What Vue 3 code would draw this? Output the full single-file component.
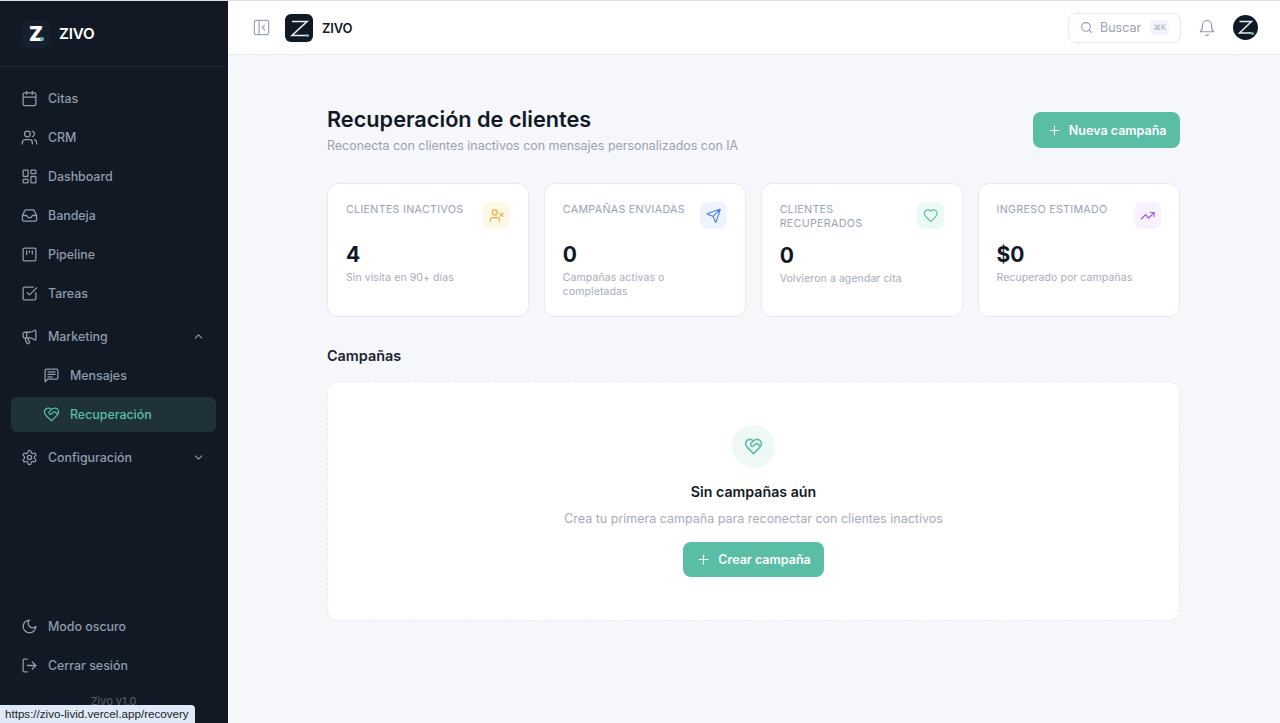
<script setup>
const c = (x, y, r) => `M${x - r} ${y}a${r} ${r} 0 1 0 ${2 * r} 0a${r} ${r} 0 1 0 ${-2 * r} 0z`
const sq = 'M5 3h14a2 2 0 0 1 2 2v14a2 2 0 0 1-2 2H5a2 2 0 0 1-2-2V5a2 2 0 0 1 2-2z'
const heart = 'M19 14c1.49-1.46 3-3.21 3-5.5A5.5 5.5 0 0 0 16.5 3c-1.76 0-3 .5-4.5 2-1.5-1.5-2.74-2-4.5-2A5.5 5.5 0 0 0 2 8.5c0 2.3 1.5 4.05 3 5.5l7 7Z'
const handshake = heart + 'M12 5 9.04 7.96a2.17 2.17 0 0 0 0 3.08c.82.82 2.13.85 3 .07l2.07-1.9a2.82 2.82 0 0 1 3.79 0l2.96 2.66'
const icons = {
  calendar: 'M5 4h14a2 2 0 0 1 2 2v14a2 2 0 0 1-2 2H5a2 2 0 0 1-2-2V6a2 2 0 0 1 2-2zM16 2v4M8 2v4M3 10h18',
  users: 'M16 21v-2a4 4 0 0 0-4-4H6a4 4 0 0 0-4 4v2' + c(9, 7, 4) + 'M22 21v-2a4 4 0 0 0-3-3.87M16 3.13a4 4 0 0 1 0 7.75',
  dash: 'M4 3h5a1 1 0 0 1 1 1v7a1 1 0 0 1-1 1H4a1 1 0 0 1-1-1V4a1 1 0 0 1 1-1zM15 3h5a1 1 0 0 1 1 1v3a1 1 0 0 1-1 1h-5a1 1 0 0 1-1-1V4a1 1 0 0 1 1-1zM15 12h5a1 1 0 0 1 1 1v7a1 1 0 0 1-1 1h-5a1 1 0 0 1-1-1v-7a1 1 0 0 1 1-1zM4 16h5a1 1 0 0 1 1 1v3a1 1 0 0 1-1 1H4a1 1 0 0 1-1-1v-3a1 1 0 0 1 1-1z',
  inbox: 'M22 12h-6l-2 3h-4l-2-3H2M5.45 5.11 2 12v6a2 2 0 0 0 2 2h16a2 2 0 0 0 2-2v-6l-3.45-6.89A2 2 0 0 0 16.76 4H7.24a2 2 0 0 0-1.79 1.11z',
  kanban: sq + 'M8 7v5M12 7v2M16 7v4',
  check: 'M21 10.656V19a2 2 0 0 1-2 2H5a2 2 0 0 1-2-2V5a2 2 0 0 1 2-2h12.344M9 11l3 3L22 4',
  megaphone: 'M11 6a13 13 0 0 0 8.4-2.8A1 1 0 0 1 21 4v12a1 1 0 0 1-1.6.8A13 13 0 0 0 11 14H5a2 2 0 0 1-2-2V8a2 2 0 0 1 2-2zM6 14a12 12 0 0 0 2.4 7.2 2 2 0 0 0 3.2-2.4A8 8 0 0 1 10 14M8 6v8',
  message: 'M21 15a2 2 0 0 1-2 2H7l-4 4V5a2 2 0 0 1 2-2h14a2 2 0 0 1 2 2zM7 7h10M7 10.5h10M7 14h6',
  handshake,
  gear: 'M12.22 2h-.44a2 2 0 0 0-2 2v.18a2 2 0 0 1-1 1.73l-.43.25a2 2 0 0 1-2 0l-.15-.08a2 2 0 0 0-2.73.73l-.22.38a2 2 0 0 0 .73 2.73l.15.1a2 2 0 0 1 1 1.72v.51a2 2 0 0 1-1 1.74l-.15.09a2 2 0 0 0-.73 2.73l.22.38a2 2 0 0 0 2.73.73l.15-.08a2 2 0 0 1 2 0l.43.25a2 2 0 0 1 1 1.73V20a2 2 0 0 0 2 2h.44a2 2 0 0 0 2-2v-.18a2 2 0 0 1 1-1.73l.43-.25a2 2 0 0 1 2 0l.15.08a2 2 0 0 0 2.73-.73l.22-.39a2 2 0 0 0-.73-2.73l-.15-.08a2 2 0 0 1-1-1.74v-.5a2 2 0 0 1 1-1.74l.15-.09a2 2 0 0 0 .73-2.73l-.22-.38a2 2 0 0 0-2.73-.73l-.15.08a2 2 0 0 1-2 0l-.43-.25a2 2 0 0 1-1-1.73V4a2 2 0 0 0-2-2z' + c(12, 12, 3),
  moon: 'M12 3a6 6 0 0 0 9 9 9 9 0 1 1-9-9Z',
  logout: 'M9 21H5a2 2 0 0 1-2-2V5a2 2 0 0 1 2-2h4M16 17l5-5-5-5M21 12H9',
  panel: sq + 'M9 3v18M16 15l-3-3 3-3',
  search: c(11, 11, 8) + 'M21 21l-4.3-4.3',
  bell: 'M6 8a6 6 0 0 1 12 0c0 7 3 9 3 9H3s3-2 3-9M10.3 21a1.94 1.94 0 0 0 3.4 0',
  userx: 'M16 21v-2a4 4 0 0 0-4-4H6a4 4 0 0 0-4 4v2' + c(9, 7, 4) + 'M17 8l5 5M22 8l-5 5',
  send: 'M14.536 21.686a.5.5 0 0 0 .937-.024l6.5-19a.496.496 0 0 0-.635-.635l-19 6.5a.5.5 0 0 0-.024.937l7.93 3.18a2 2 0 0 1 1.112 1.11zM21.854 2.147l-10.94 10.939',
  heart,
  trend: 'M22 7l-8.5 8.5-5-5L2 17M16 7h6v6',
  plus: 'M5 12h14M12 5v14',
  up: 'M18 15l-6-6-6 6',
  down: 'M6 9l6 6 6-6'
}
const group1 = [
  { label: 'Citas', icon: 'calendar' },
  { label: 'CRM', icon: 'users' },
  { label: 'Dashboard', icon: 'dash' },
  { label: 'Bandeja', icon: 'inbox' },
  { label: 'Pipeline', icon: 'kanban' },
  { label: 'Tareas', icon: 'check' }
]
const footer = [
  { label: 'Modo oscuro', icon: 'moon' },
  { label: 'Cerrar sesión', icon: 'logout' }
]
const cards = [
  { title: 'CLIENTES INACTIVOS', value: '4', note: 'Sin visita en 90+ días', icon: 'userx', tone: 'amber' },
  { title: 'CAMPAÑAS ENVIADAS', value: '0', note: 'Campañas activas o completadas', icon: 'send', tone: 'blue' },
  { title: 'CLIENTES RECUPERADOS', value: '0', note: 'Volvieron a agendar cita', icon: 'heart', tone: 'green' },
  { title: 'INGRESO ESTIMADO', value: '$0', note: 'Recuperado por campañas', icon: 'trend', tone: 'purple' }
]
</script>

<template>
  <div class="page">
    <aside class="sidebar">
      <div class="brand">
        <span class="brand-mark">Z<i class="brand-dot"></i></span>
        <span class="brand-name">ZIVO</span>
      </div>
      <nav class="nav">
        <div class="group">
          <a v-for="item in group1" :key="item.label" class="item">
            <svg class="ico" viewBox="0 0 24 24"><path :d="icons[item.icon]" /></svg>
            <span>{{ item.label }}</span>
          </a>
        </div>
        <div class="group">
          <a class="item">
            <svg class="ico" viewBox="0 0 24 24"><path :d="icons.megaphone" /></svg>
            <span>Marketing</span>
            <svg class="chev" viewBox="0 0 24 24"><path :d="icons.up" /></svg>
          </a>
          <a class="item sub">
            <svg class="ico" viewBox="0 0 24 24"><path :d="icons.message" /></svg>
            <span>Mensajes</span>
          </a>
          <a class="item sub active">
            <svg class="ico" viewBox="0 0 24 24"><path :d="icons.handshake" /></svg>
            <span>Recuperación</span>
          </a>
        </div>
        <div class="group">
          <a class="item">
            <svg class="ico" viewBox="0 0 24 24"><path :d="icons.gear" /></svg>
            <span>Configuración</span>
            <svg class="chev" viewBox="0 0 24 24"><path :d="icons.down" /></svg>
          </a>
        </div>
      </nav>
      <div class="side-foot">
        <a v-for="item in footer" :key="item.label" class="item">
          <svg class="ico" viewBox="0 0 24 24"><path :d="icons[item.icon]" /></svg>
          <span>{{ item.label }}</span>
        </a>
        <div class="version">Zivo v1.0</div>
      </div>
    </aside>

    <div class="right">
      <header class="topbar">
        <svg class="panel-ico" viewBox="0 0 24 24"><path :d="icons.panel" /></svg>
        <svg class="logo" viewBox="0 0 28 28">
          <rect width="28" height="28" rx="6" fill="#101a27" />
          <path d="M7 7.5h15L7 21.5h15" fill="none" stroke="#e8ebee" stroke-width="1.6" />
          <circle cx="22.5" cy="21.5" r="1.6" fill="#5abda6" />
        </svg>
        <span class="top-name">ZIVO</span>
        <div class="spacer"></div>
        <div class="searchbox">
          <svg class="search-ico" viewBox="0 0 24 24"><path :d="icons.search" /></svg>
          <span class="search-text">Buscar</span>
          <kbd class="kbd">⌘K</kbd>
        </div>
        <svg class="bell" viewBox="0 0 24 24"><path :d="icons.bell" /></svg>
        <svg class="avatar" viewBox="0 0 25 25">
          <circle cx="12.5" cy="12.5" r="12.5" fill="#101a27" />
          <path d="M6.5 6.5h12L6.5 18h12" fill="none" stroke="#e8ebee" stroke-width="1.5" />
          <circle cx="19.5" cy="18.5" r="1.5" fill="#5abda6" />
        </svg>
      </header>

      <main class="main">
        <div class="content">
          <div class="head">
            <div>
              <h1 class="title">Recuperación de clientes</h1>
              <p class="subtitle">Reconecta con clientes inactivos con mensajes personalizados con IA</p>
            </div>
            <button class="btn head-btn">
              <svg class="plus" viewBox="0 0 24 24"><path :d="icons.plus" /></svg>
              Nueva campaña
            </button>
          </div>

          <div class="cards">
            <div v-for="card in cards" :key="card.title" class="card">
              <div class="card-top">
                <div class="card-title">{{ card.title }}</div>
                <div class="badge" :class="card.tone">
                  <svg viewBox="0 0 24 24"><path :d="icons[card.icon]" /></svg>
                </div>
              </div>
              <div class="value">{{ card.value }}</div>
              <div class="note">{{ card.note }}</div>
            </div>
          </div>

          <h2 class="section">Campañas</h2>
          <div class="empty">
            <div class="empty-circle">
              <svg viewBox="0 0 24 24"><path :d="icons.handshake" /></svg>
            </div>
            <h3 class="empty-title">Sin campañas aún</h3>
            <p class="empty-text">Crea tu primera campaña para reconectar con clientes inactivos</p>
            <button class="btn small">
              <svg class="plus" viewBox="0 0 24 24"><path :d="icons.plus" /></svg>
              Crear campaña
            </button>
          </div>
        </div>
      </main>
    </div>

    <div class="status">https://zivo-livid.vercel.app/recovery</div>
  </div>
</template>

<style>
html, body { margin: 0; background: #f5f7fb; }
</style>

<style scoped>
.page {
  position: relative;
  display: flex;
  height: 722px;
  overflow: hidden;
  border-top: 1px solid #dfe1e4;
  font-family: Inter, "Noto Sans", sans-serif;
  color: #111827;
}
.sidebar {
  width: 228px;
  flex: none;
  display: flex;
  flex-direction: column;
  background: #111a24;
  color: #8f9bab;
}
.brand {
  height: 65px;
  flex: none;
  display: flex;
  align-items: center;
  gap: 9px;
  padding-left: 22px;
  border-bottom: 1px solid #1f2833;
}
.brand-mark {
  position: relative;
  width: 28px;
  height: 28px;
  border-radius: 6px;
  background: #161f2b;
  color: #fff;
  font-size: 20px;
  font-weight: 900;
  line-height: 28px;
  text-align: center;
}
.brand-dot {
  position: absolute;
  left: 18px;
  top: 17px;
  width: 4px;
  height: 4px;
  border-radius: 50%;
  background: #5abda6;
}
.brand-name {
  color: #fff;
  font-size: 15.2px;
  font-weight: 600;
  letter-spacing: -0.2px;
}
.nav {
  flex: 1;
  display: flex;
  flex-direction: column;
  gap: 8px;
  padding: 14px 12px 0 11px;
}
.group {
  display: flex;
  flex-direction: column;
  gap: 4px;
}
.item {
  height: 35px;
  display: flex;
  align-items: center;
  gap: 10px;
  padding: 0 10px;
  border-radius: 6px;
  font-size: 12.4px;
  font-weight: 500;
}
.ico {
  width: 17px;
  height: 17px;
  flex: none;
  fill: none;
  stroke: currentColor;
  stroke-width: 1.8;
  stroke-linecap: round;
  stroke-linejoin: round;
}
.chev {
  width: 13px;
  height: 13px;
  margin-left: auto;
  margin-right: 1px;
  fill: none;
  stroke: currentColor;
  stroke-width: 2;
  stroke-linecap: round;
  stroke-linejoin: round;
}
.sub { padding-left: 32px; }
.active {
  background: #1f3238;
  color: #5abda6;
}
.side-foot {
  display: flex;
  flex-direction: column;
  gap: 4px;
  padding: 0 12px 15px 11px;
}
.version {
  margin-top: 7px;
  text-align: center;
  font-size: 11px;
  line-height: 14px;
  color: #55606e;
}
.right {
  flex: 1;
  min-width: 0;
  display: flex;
  flex-direction: column;
}
.topbar {
  height: 53px;
  flex: none;
  display: flex;
  align-items: center;
  padding: 0 22px 0 24px;
  background: #fff;
  border-bottom: 1px solid #e8ebf0;
}
.panel-ico {
  width: 19px;
  height: 19px;
  fill: none;
  stroke: #98a2b2;
  stroke-width: 1.5;
  stroke-linecap: round;
  stroke-linejoin: round;
}
.logo {
  width: 28px;
  height: 28px;
  margin-left: 14px;
}
.top-name {
  margin-left: 9px;
  font-size: 13px;
  font-weight: 600;
  letter-spacing: -0.2px;
  color: #111827;
}
.spacer { flex: 1; }
.searchbox {
  width: 113px;
  height: 30px;
  box-sizing: border-box;
  display: flex;
  align-items: center;
  padding: 0 11px 0 11px;
  border: 1px solid #e6e9ee;
  border-radius: 8px;
  background: #fff;
}
.search-ico {
  width: 13px;
  height: 13px;
  fill: none;
  stroke: #8f9bab;
  stroke-width: 2;
  stroke-linecap: round;
}
.search-text {
  margin-left: 7px;
  font-size: 12.5px;
  color: #98a2b2;
}
.kbd {
  margin-left: auto;
  padding: 0 3px;
  height: 15px;
  border-radius: 3px;
  background: #f3f5fa;
  color: #a4adbb;
  font-family: Inter, sans-serif;
  font-size: 7.5px;
  line-height: 15px;
}
.bell {
  width: 18px;
  height: 18px;
  margin-left: 17px;
  fill: none;
  stroke: #8f9bab;
  stroke-width: 1.6;
  stroke-linecap: round;
  stroke-linejoin: round;
}
.avatar {
  width: 25px;
  height: 25px;
  margin-left: 17px;
}
.main {
  flex: 1;
  background: #f5f7fb;
}
.content {
  width: 853px;
  margin-left: 99px;
  padding-top: 51px;
}
.head {
  display: flex;
  justify-content: space-between;
  align-items: flex-start;
}
.title {
  margin: 0;
  font-size: 21.7px;
  line-height: 26px;
  font-weight: 600;
  color: #111827;
}
.subtitle {
  margin: 5px 0 0;
  font-size: 12.45px;
  line-height: 18px;
  color: #98a2b2;
}
.btn {
  height: 36px;
  display: inline-flex;
  align-items: center;
  gap: 7px;
  padding: 0 13.5px;
  border: 0;
  border-radius: 8px;
  background: #5abda6;
  color: #fff;
  font-family: inherit;
  font-size: 12.5px;
  font-weight: 600;
}
.head-btn { margin-top: 6px; }
.plus {
  width: 15px;
  height: 15px;
  fill: none;
  stroke: currentColor;
  stroke-width: 1.8;
  stroke-linecap: round;
}
.cards {
  display: grid;
  grid-template-columns: repeat(4, 1fr);
  gap: 14.4px;
  margin-top: 28px;
}
.card {
  height: 134px;
  box-sizing: border-box;
  padding: 18px;
  background: #fff;
  border: 1px solid #e6e9ef;
  border-radius: 11px;
}
.card-top {
  display: flex;
  justify-content: space-between;
  align-items: flex-start;
  gap: 8px;
  min-height: 28px;
}
.card-title {
  margin-top: 1px;
  font-size: 10.7px;
  line-height: 14px;
  font-weight: 400;
  letter-spacing: 0.3px;
  color: #98a2b2;
}
.badge {
  width: 27px;
  height: 27px;
  flex: none;
  display: flex;
  align-items: center;
  justify-content: center;
  border-radius: 7px;
}
.badge svg {
  width: 15.5px;
  height: 15.5px;
  fill: none;
  stroke: currentColor;
  stroke-width: 1.8;
  stroke-linecap: round;
  stroke-linejoin: round;
}
.amber { background: #fef9e7; color: #f0ab3c; }
.blue { background: #eef4fe; color: #4f80ee; }
.green { background: #ecfaf4; color: #5abda6; }
.purple { background: #f7f2fe; color: #a45be8; }
.value {
  margin-top: 11px;
  font-size: 21px;
  line-height: 27px;
  font-weight: 700;
  color: #111827;
}
.note {
  margin-top: 3px;
  font-size: 10.5px;
  line-height: 14px;
  letter-spacing: 0.08px;
  color: #a4adbb;
}
.section {
  margin: 30px 0 0;
  font-size: 14.4px;
  line-height: 18px;
  font-weight: 600;
  color: #1b2431;
}
.empty {
  margin-top: 16px;
  height: 240px;
  box-sizing: border-box;
  display: flex;
  flex-direction: column;
  align-items: center;
  padding-top: 43px;
  background: #fff;
  border: 1px dashed #e3e6ec;
  border-radius: 11px;
}
.empty-circle {
  width: 43px;
  height: 43px;
  display: flex;
  align-items: center;
  justify-content: center;
  border-radius: 50%;
  background: #eef8f5;
  color: #5abda6;
}
.empty-circle svg {
  width: 19px;
  height: 19px;
  fill: none;
  stroke: currentColor;
  stroke-width: 2;
  stroke-linecap: round;
  stroke-linejoin: round;
}
.empty-title {
  margin: 15px 0 0;
  font-size: 14.2px;
  line-height: 18px;
  font-weight: 600;
  color: #111827;
}
.empty-text {
  margin: 9px 0 0;
  font-size: 12.5px;
  line-height: 17px;
  color: #a4adbb;
}
.small {
  height: 35px;
  margin-top: 15px;
}
.status {
  position: absolute;
  left: 0;
  bottom: 0;
  height: 18px;
  padding: 0 6px 0 5px;
  background: #dfe9f7;
  border-top-right-radius: 4px;
  color: #222;
  font-family: "Liberation Sans", Arial, sans-serif;
  font-size: 11.6px;
  line-height: 18px;
}
</style>
